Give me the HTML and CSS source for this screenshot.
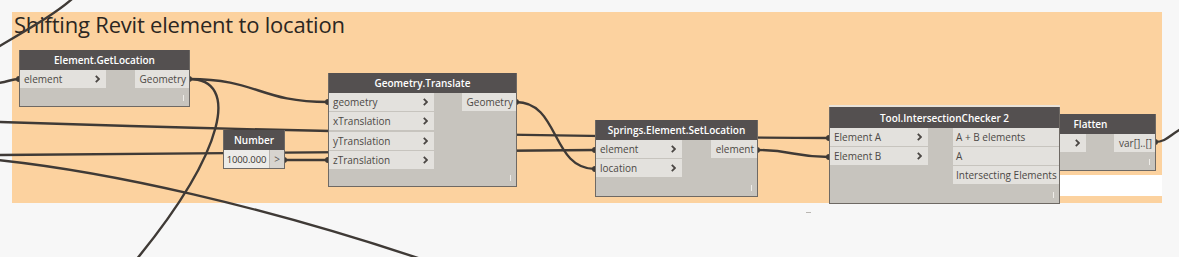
FILE: index.html
```html
<!DOCTYPE html>
<html>
<head>
<meta charset="utf-8">
<link rel="stylesheet" href="styles.css">
</head>
<body>
<div class="canvas">
  <div class="group">
    <div class="group-title">Shifting Revit element to location</div>
    <div class="group-gap"></div>
  </div>
  <div class="dash"></div>

  <svg class="wires" width="1179" height="257" viewBox="0 0 1179 257">
    <g fill="none" stroke="#3f3a36" stroke-width="2.4" stroke-linecap="round">
      <path d="M72,-1 C55,14 30,28 -2,47"/>
      <path d="M-2,83 C8,82 11,79 19,79"/>
      <path d="M-2,122 C250,130 550,137 829,138"/>
      <path d="M-2,155 C200,153 400,151 595,150"/>
      <path d="M-2,160 C110,172 260,205 430,262"/>
      <path d="M189,79 C240,79 226,150 136,260"/>
      <path d="M189,79 C258,79 259,102 328,102"/>
      <path d="M284,160 C306,160 306,160 328,160"/>
      <path d="M516,102 C560,102 551,169 595,169"/>
      <path d="M757,150 C793,150 793,157 829,157"/>
      <path d="M1155,142 C1166,142 1170,135 1181,129"/>
    </g>
    <g fill="#3f3a36">
      <circle cx="19" cy="79" r="3"/>
      <circle cx="189" cy="79" r="3"/>
      <circle cx="328" cy="102" r="3"/>
      <circle cx="328" cy="160" r="3"/>
      <circle cx="284" cy="160" r="3"/>
      <circle cx="516" cy="102" r="3"/>
      <circle cx="595" cy="150" r="3"/>
      <circle cx="595" cy="169" r="3"/>
      <circle cx="757" cy="150" r="3"/>
      <circle cx="829" cy="138" r="3"/>
      <circle cx="829" cy="157" r="3"/>
      <circle cx="1155" cy="142" r="3"/>
    </g>
  </svg>

  <div class="node n-getloc">
    <div class="hdr">Element.GetLocation</div>
    <div class="ports">
      <div class="col in">
        <div class="port"><span>element</span><svg class="chev" width="5" height="8" viewBox="0 0 5 8"><polyline points="0.8,0.8 4,4 0.8,7.2"/></svg></div>
      </div>
      <div class="col out">
        <div class="port">Geometry</div>
      </div>
    </div>
    <div class="foot"><i class="tick"></i></div>
  </div>

  <div class="node n-translate">
    <div class="hdr">Geometry.Translate</div>
    <div class="ports">
      <div class="col in">
        <div class="port"><span>geometry</span><svg class="chev" width="5" height="8" viewBox="0 0 5 8"><polyline points="0.8,0.8 4,4 0.8,7.2"/></svg></div>
        <div class="port"><span>xTranslation</span><svg class="chev" width="5" height="8" viewBox="0 0 5 8"><polyline points="0.8,0.8 4,4 0.8,7.2"/></svg></div>
        <div class="port"><span>yTranslation</span><svg class="chev" width="5" height="8" viewBox="0 0 5 8"><polyline points="0.8,0.8 4,4 0.8,7.2"/></svg></div>
        <div class="port"><span>zTranslation</span><svg class="chev" width="5" height="8" viewBox="0 0 5 8"><polyline points="0.8,0.8 4,4 0.8,7.2"/></svg></div>
      </div>
      <div class="col out">
        <div class="port">Geometry</div>
      </div>
    </div>
    <div class="foot"><i class="tick"></i></div>
  </div>

  <div class="node n-number">
    <div class="hdr">Number</div>
    <div class="num-row">
      <div class="num-val">1000.000</div>
      <div class="num-btn">&gt;</div>
    </div>
  </div>

  <div class="node n-setloc">
    <div class="hdr">Springs.Element.SetLocation</div>
    <div class="ports">
      <div class="col in">
        <div class="port"><span>element</span><svg class="chev" width="5" height="8" viewBox="0 0 5 8"><polyline points="0.8,0.8 4,4 0.8,7.2"/></svg></div>
        <div class="port"><span>location</span><svg class="chev" width="5" height="8" viewBox="0 0 5 8"><polyline points="0.8,0.8 4,4 0.8,7.2"/></svg></div>
      </div>
      <div class="col out">
        <div class="port">element</div>
      </div>
    </div>
    <div class="foot"><i class="tick"></i></div>
  </div>

  <div class="node n-flatten">
    <div class="hdr">Flatten</div>
    <div class="ports">
      <div class="col in">
        <div class="port"><span></span><svg class="chev" width="5" height="8" viewBox="0 0 5 8"><polyline points="0.8,0.8 4,4 0.8,7.2"/></svg></div>
      </div>
      <div class="col out">
        <div class="port">var[]..[]</div>
      </div>
    </div>
    <div class="foot"><i class="tick"></i></div>
  </div>

  <div class="node n-checker">
    <div class="hdr">Tool.IntersectionChecker 2</div>
    <div class="ports">
      <div class="col in">
        <div class="port"><span>Element A</span><svg class="chev" width="5" height="8" viewBox="0 0 5 8"><polyline points="0.8,0.8 4,4 0.8,7.2"/></svg></div>
        <div class="port"><span>Element B</span><svg class="chev" width="5" height="8" viewBox="0 0 5 8"><polyline points="0.8,0.8 4,4 0.8,7.2"/></svg></div>
      </div>
      <div class="col out">
        <div class="port left">A + B elements</div>
        <div class="port left">A</div>
        <div class="port left">Intersecting Elements</div>
      </div>
    </div>
    <div class="foot"><i class="tick"></i></div>
  </div>
</div>
</body>
</html>
```

FILE: styles.css
```css
html, body {
  margin: 0;
  padding: 0;
}
body {
  background: #f7f7f7;
  font-family: "Open Sans", "Noto Sans", sans-serif;
}
.canvas {
  position: relative;
  width: 1179px;
  height: 257px;
  overflow: hidden;
  background: #f7f7f7;
}
.group {
  position: absolute;
  left: 12px;
  top: 12px;
  width: 1150px;
  height: 191px;
  background: #fcd29f;
}
.group-title {
  font-size: 22px;
  line-height: 25px;
  color: #2b2622;
  padding-left: 2px;
  letter-spacing: -0.2px;
}
.group-gap {
  position: absolute;
  left: 1046px;
  top: 163px;
  width: 104px;
  height: 21px;
  background: #ffffff;
}
.dash {
  position: absolute;
  left: 806px;
  top: 212px;
  width: 5px;
  height: 1px;
  background: #b9b6b2;
}
.wires {
  position: absolute;
  left: 0;
  top: 0;
}
.node {
  position: absolute;
  box-sizing: border-box;
  display: flex;
  flex-direction: column;
  background: #c7c4be;
  border: 1px solid #6e6964;
  border-top: none;
}
.hdr {
  height: 20px;
  flex: none;
  background: #545050;
  color: #ffffff;
  font-weight: 600;
  font-size: 10px;
  display: flex;
  align-items: center;
  justify-content: center;
  white-space: nowrap;
}
.ports {
  display: flex;
  justify-content: space-between;
  align-items: flex-start;
}
.col {
  display: flex;
  flex-direction: column;
  gap: 1px;
}
.port {
  height: 18px;
  box-sizing: border-box;
  display: flex;
  align-items: center;
  background: #e3e1dd;
  font-size: 10px;
  color: #4c4845;
  white-space: nowrap;
}
.in .port {
  justify-content: space-between;
  padding-left: 4px;
  padding-right: 6px;
}
.out .port {
  justify-content: flex-end;
  padding-right: 3px;
}
.out .port.left {
  justify-content: flex-start;
  padding-left: 3px;
}
.chev {
  flex: none;
}
.chev polyline {
  fill: none;
  stroke: #4a4643;
  stroke-width: 1.8;
}
.foot {
  flex: 1;
  position: relative;
}
.tick {
  position: absolute;
  right: 5px;
  bottom: 5px;
  width: 1px;
  height: 6px;
  background: #eeece8;
}

.n-getloc { left: 19px; top: 50px; width: 171px; height: 57px; }
.n-getloc .in { width: 86px; }
.n-getloc .out { width: 54px; }

.n-translate { left: 328px; top: 73px; width: 189px; height: 114px; }
.n-translate .in { width: 105px; }
.n-translate .out { width: 54px; }
.n-translate .col { gap: 1.3px; }

.n-number { left: 223px; top: 130px; width: 62px; height: 39px; }
.num-row {
  display: flex;
  height: 19px;
}
.num-val {
  width: 45px;
  background: #ecebe8;
  color: #3a3633;
  font-size: 9.5px;
  letter-spacing: -0.1px;
  display: flex;
  align-items: center;
  justify-content: center;
  border-right: 1px solid #b9b5b0;
}
.num-btn {
  flex: 1;
  background: #d7d4cf;
  color: #5a5652;
  font-size: 10px;
  display: flex;
  align-items: center;
  justify-content: center;
}

.n-setloc { left: 595px; top: 120px; width: 163px; height: 77px; }
.n-setloc .in { width: 86px; }
.n-setloc .out { width: 46px; }

.n-checker { left: 829px; top: 107px; width: 231px; height: 97px; box-shadow: 0 -2px 0 #e9e3da; }
.n-checker .hdr { height: 21px; }
.n-checker .in { width: 98px; }
.n-checker .out { width: 106px; }

.n-flatten { left: 1025px; top: 114px; width: 131px; height: 57px; }
.n-flatten .in { width: 60px; }
.n-flatten .out { width: 41px; }
```
